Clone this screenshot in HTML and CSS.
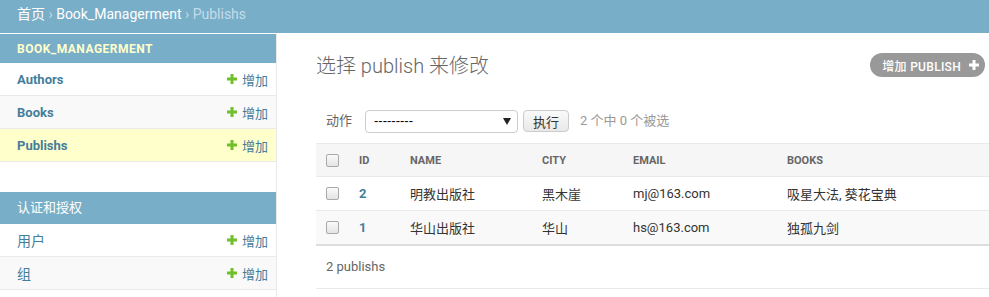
FILE: index.html
```html
<!DOCTYPE html>
<html lang="zh-hans">
<head>
    <meta charset="utf-8">
    <title>选择 publish 来修改 | Django 站点管理员</title>
    <link rel="stylesheet" href="styles.css">
</head>
<body>

<div class="breadcrumbs">
    <a href="#">首页</a> &rsaquo;
    <a href="#">Book_Managerment</a> &rsaquo;
    <span class="current">Publishs</span>
</div>

<div class="main">
    <!-- ======= Sidebar ======= -->
    <nav class="sidebar">
        <div class="module current-app">
            <div class="caption caption-app"><a href="#" class="section">Book_Managerment</a></div>
            <div class="model-row">
                <a href="#" class="model-name">Authors</a>
                <a href="#" class="addlink"><svg width="10" height="10" viewBox="0 0 10 10"><path d="M3.5 0h3v3.5H10v3H6.5V10h-3V6.5H0v-3h3.5z" fill="#70bf2b"/></svg>增加</a>
            </div>
            <div class="model-row alt">
                <a href="#" class="model-name">Books</a>
                <a href="#" class="addlink"><svg width="10" height="10" viewBox="0 0 10 10"><path d="M3.5 0h3v3.5H10v3H6.5V10h-3V6.5H0v-3h3.5z" fill="#70bf2b"/></svg>增加</a>
            </div>
            <div class="model-row current-model">
                <a href="#" class="model-name">Publishs</a>
                <a href="#" class="addlink"><svg width="10" height="10" viewBox="0 0 10 10"><path d="M3.5 0h3v3.5H10v3H6.5V10h-3V6.5H0v-3h3.5z" fill="#70bf2b"/></svg>增加</a>
            </div>
        </div>

        <div class="module">
            <div class="caption caption-cn"><a href="#" class="section">认证和授权</a></div>
            <div class="model-row">
                <a href="#" class="model-name plain">用户</a>
                <a href="#" class="addlink"><svg width="10" height="10" viewBox="0 0 10 10"><path d="M3.5 0h3v3.5H10v3H6.5V10h-3V6.5H0v-3h3.5z" fill="#70bf2b"/></svg>增加</a>
            </div>
            <div class="model-row alt">
                <a href="#" class="model-name plain">组</a>
                <a href="#" class="addlink"><svg width="10" height="10" viewBox="0 0 10 10"><path d="M3.5 0h3v3.5H10v3H6.5V10h-3V6.5H0v-3h3.5z" fill="#70bf2b"/></svg>增加</a>
            </div>
        </div>
    </nav>

    <!-- ======= Content ======= -->
    <section class="content">
        <div class="title-row">
            <h1>选择 publish 来修改</h1>
            <a href="#" class="addbutton">增加 PUBLISH
                <svg width="10" height="10" viewBox="0 0 10 10"><path d="M3.5 0h3v3.5H10v3H6.5V10h-3V6.5H0v-3h3.5z" fill="#fff"/></svg>
            </a>
        </div>

        <div class="changelist">
            <div class="actions">
                <span class="action-label">动作</span>
                <span class="select"><span>---------</span><i class="arrow"></i></span>
                <button class="go">执行</button>
                <span class="counter">2 个中 0 个被选</span>
            </div>

            <table class="result-list">
                <colgroup>
                    <col style="width: 33px">
                    <col style="width: 51px">
                    <col style="width: 132px">
                    <col style="width: 91px">
                    <col style="width: 154px">
                    <col>
                </colgroup>
                <thead>
                    <tr>
                        <th><span class="check"></span></th>
                        <th>Id</th>
                        <th>Name</th>
                        <th>City</th>
                        <th>Email</th>
                        <th>Books</th>
                    </tr>
                </thead>
                <tbody>
                    <tr>
                        <td><span class="check"></span></td>
                        <td><a href="#" class="id-link">2</a></td>
                        <td>明教出版社</td>
                        <td>黑木崖</td>
                        <td>mj@163.com</td>
                        <td>吸星大法, 葵花宝典</td>
                    </tr>
                    <tr class="row2">
                        <td><span class="check"></span></td>
                        <td><a href="#" class="id-link">1</a></td>
                        <td>华山出版社</td>
                        <td>华山</td>
                        <td>hs@163.com</td>
                        <td>独孤九剑</td>
                    </tr>
                </tbody>
            </table>

            <p class="paginator">2 publishs</p>
        </div>
    </section>
</div>

</body>
</html>
```

FILE: styles.css
```css
html {
    overflow: hidden;
}

body {
    margin: 0;
    padding: 0;
    font-family: Roboto, "Noto Sans CJK SC", sans-serif;
    font-size: 13px;
    color: #333;
    background: #fff;
}

a {
    text-decoration: none;
}

/* Breadcrumbs */
.breadcrumbs {
    height: 33px;
    box-sizing: border-box;
    padding: 5px 17px;
    line-height: 18px;
    font-size: 14px;
    background: #79aec8;
    color: #c4dce8;
    white-space: nowrap;
}

.breadcrumbs a {
    color: #fff;
}

/* Layout */
.main {
    display: flex;
    height: 264px;
}

.sidebar {
    flex: 0 0 276px;
    padding-top: 1px;
    border-right: 1px solid #eaeaea;
}

.module {
    margin-bottom: 30px;
}

.module:last-child {
    margin-bottom: 0;
}

.caption {
    height: 29px;
    line-height: 29px;
    padding: 0 17px;
    background: #79aec8;
    font-size: 13px;
}

.caption-cn {
    height: 32px;
    line-height: 32px;
}

.caption .section {
    color: #fff;
}

.caption-app .section {
    color: #ffc;
    font-weight: bold;
    font-size: 12px;
    letter-spacing: 0.5px;
    text-transform: uppercase;
}

.model-row {
    display: flex;
    align-items: center;
    justify-content: space-between;
    height: 32px;
    padding: 0 8px 0 17px;
    border-bottom: 1px solid #eaeaea;
}

.model-row.alt {
    background: #f9f9f9;
}

.model-row.current-model {
    background: #ffc;
}

.model-name {
    color: #447e9b;
    font-weight: bold;
}

.model-name.plain {
    font-weight: normal;
    font-size: 14px;
}

.addlink {
    display: flex;
    align-items: center;
    gap: 5px;
    color: #447e9b;
}

/* Content */
.content {
    flex: 1;
    min-width: 0;
    padding: 20px 4px 0 39px;
}

.title-row {
    display: flex;
    justify-content: space-between;
    align-items: flex-start;
}

h1 {
    margin: 0 0 20px;
    font-size: 20px;
    line-height: 26px;
    font-weight: 300;
    color: #666;
}

.addbutton {
    display: flex;
    align-items: center;
    gap: 8px;
    height: 24px;
    padding: 0 6px 0 12px;
    border-radius: 15px;
    background: #999;
    color: #fff;
    font-size: 12px;
    font-weight: 500;
    letter-spacing: 0.3px;
}

.changelist {
    width: 690px;
}

.actions {
    display: flex;
    align-items: center;
    height: 24px;
    padding: 10px;
    line-height: 24px;
}

.action-label {
    color: #666;
    margin-right: 13px;
}

.select {
    display: flex;
    align-items: center;
    justify-content: space-between;
    width: 153px;
    height: 23px;
    box-sizing: border-box;
    padding: 0 6px 0 8px;
    border: 1px solid #ccc;
    border-radius: 4px;
    font-family: "Liberation Sans", sans-serif;
    font-size: 13px;
    color: #000;
}

.arrow {
    width: 0;
    height: 0;
    border-left: 4px solid transparent;
    border-right: 4px solid transparent;
    border-top: 7px solid #222;
}

.go {
    height: 22px;
    margin-left: 5px;
    padding: 0 9px;
    border: 1px solid #ccc;
    border-radius: 4px;
    background: linear-gradient(#fafafa, #e8e8e8);
    font-family: Roboto, "Noto Sans CJK SC", sans-serif;
    font-size: 13px;
    color: #333;
}

.counter {
    margin-left: 11px;
    color: #999;
}

table.result-list {
    width: 100%;
    table-layout: fixed;
    border-collapse: collapse;
}

.result-list th,
.result-list td {
    padding: 0 10px;
    text-align: left;
    white-space: nowrap;
}

.result-list thead th {
    height: 32px;
    background: #f6f6f6;
    border-top: 1px solid #eaeaea;
    border-bottom: 1px solid #eaeaea;
    font-size: 11px;
    font-weight: bold;
    text-transform: uppercase;
    color: #666;
}

.result-list tbody td {
    height: 33px;
    border-bottom: 1px solid #eaeaea;
    color: #333;
}

.result-list tbody tr.row2 td {
    background: #f9f9f9;
    border-bottom: 2px solid #ddd;
}

.id-link {
    color: #447e9b;
    font-weight: bold;
}

.check {
    display: block;
    width: 13px;
    height: 13px;
    box-sizing: border-box;
    border: 1px solid #aaa;
    border-radius: 2px;
    background: linear-gradient(#fafafa, #e4e4e4);
}

.paginator {
    margin: 0;
    padding: 11px 10px;
    line-height: 20px;
    color: #666;
    border-bottom: 1px solid #eaeaea;
}
```
